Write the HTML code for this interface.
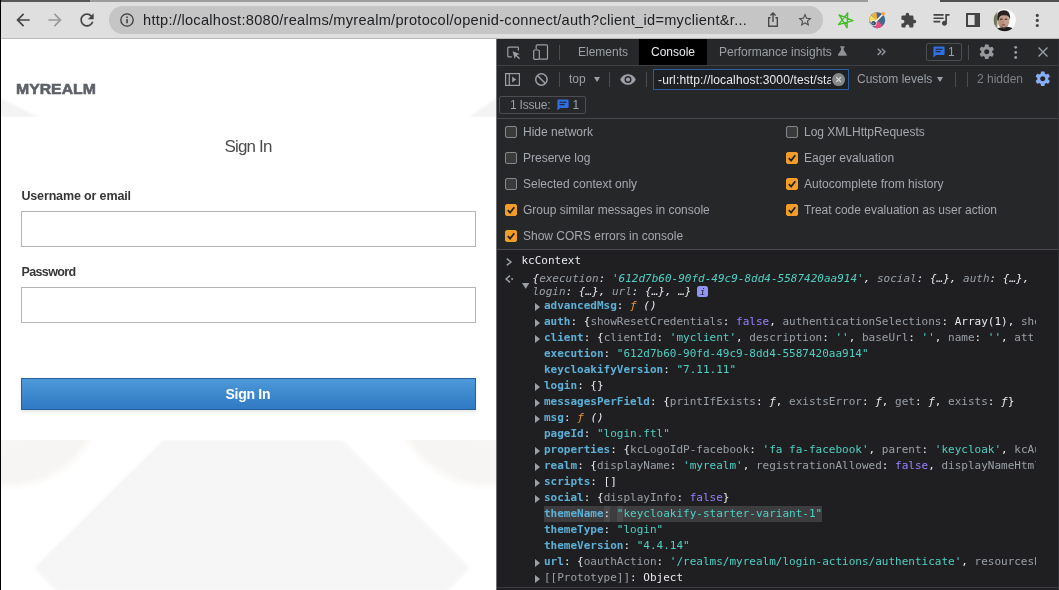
<!DOCTYPE html>
<html lang="en"><head><meta charset="utf-8"><title>Sign in to myrealm</title>
<style>
*{box-sizing:border-box;margin:0;padding:0}
html,body{width:1059px;height:590px;overflow:hidden;background:#fff}
body{position:relative;will-change:transform;font-family:"Liberation Sans",sans-serif}
#chrome>*,#page>*,#dt>*,.cb svg{position:absolute}
#chrome{position:absolute;left:0;top:0;width:1059px;height:39px;background:#dfdfdf}
#strip1{left:0;top:0;width:90px;height:2px;background:#585858}
#strip2{left:90px;top:0;width:778px;height:2px;background:#9c9c9c}
#strip3{left:940px;top:0;width:119px;height:2px;background:#505050}
#tbline{left:0;top:38px;width:1059px;height:1px;background:#b9b9b9}
#pill{left:109px;top:6px;width:714px;height:28px;border-radius:14px;background:#c5c5c5}
#url{left:143.1px;top:12px;font-size:14.6px;line-height:17px;color:#202124;white-space:nowrap;letter-spacing:.265px}
#leftedge{position:absolute;left:0;top:0;width:1px;height:590px;background:#000;z-index:50}
svg{overflow:visible}
/* page */
#page{position:absolute;left:0;top:39px;width:497px;height:551px;background:#fff;overflow:hidden}
#realm{left:15.9px;top:42px;font-weight:bold;font-size:14.4px;line-height:17px;color:#5c6067;white-space:nowrap;-webkit-text-stroke:.55px #5c6067;transform:scaleX(1.098);transform-origin:0 0}
#card{left:0;top:78px;width:497px;height:323px;background:#fff}
#title{left:224.600px;top:97.500px;white-space:nowrap;font-size:17px;line-height:20px;color:#4d4d4d;letter-spacing:-.85px}
.lbl{left:21.4px;font-size:12.5px;line-height:15px;font-weight:bold;color:#363636;white-space:nowrap}
.inp{left:21px;width:455px;height:36px;border:1px solid #b4b4b4;background:#fff}
#btn{left:21px;top:339px;width:455px;height:32px;border:1px solid #265f9c;background:linear-gradient(#4d99d8,#3079c4);box-shadow:0 2px 3px rgba(0,0,0,.1)}
#btnt{left:225.500px;top:346.500px;color:#fff;font-weight:bold;font-size:14px;line-height:17px;letter-spacing:-.28px;white-space:nowrap}
/* devtools */
#dt{position:absolute;left:497px;top:39px;width:562px;height:551px;background:#1f1f22;overflow:hidden;color:#9aa0a6;font-size:12px}
#tabs{left:0;top:0;width:562px;height:27px;background:#262729;border-bottom:1px solid #3f4042}
#row2{left:0;top:27px;width:562px;height:27px;background:#262729}
#row3{left:0;top:53px;width:562px;height:27px;background:#262729;border-bottom:1px solid #46474a}
#sett{left:0;top:80px;width:562px;height:131px;background:#262729;border-bottom:1px solid #4a4b4e}
.t{white-space:nowrap;line-height:14px}
.sep{width:1px;background:#4a4c50}
.cb{width:12px;height:12px;border-radius:2px;border:1px solid #85888c;background:#3b3b3b}
.cb.on{background:#f29d27;border-color:#f29d27}
.cl{font-size:12px;color:#a4a9af;white-space:nowrap;line-height:14px}
.ln{left:0;font-family:"DejaVu Sans Mono","Liberation Mono",monospace;font-size:11px;line-height:16px;height:16px;white-space:pre;color:#e8eaed;letter-spacing:.0px}
.k{color:#5db0d7;font-weight:bold}.s{color:#4fd0c2}.g{color:#9aa0a6}.p{color:#9980ff}.f{color:#e8912d;font-style:italic}.i{font-style:italic}.w{color:#e8eaed}
.tri{width:0;height:0;border-left:5.200px solid #9aa0a6;border-top:4px solid transparent;border-bottom:4px solid transparent;margin-top:-.5px}
</style></head><body>
<div id="chrome">
<div id="strip1"></div><div id="strip2"></div><div id="strip3"></div>
<div id="pill"></div>
<div id="url">http://localhost:8080/realms/myrealm/protocol/openid-connect/auth?client_id=myclient&amp;r...</div>

<svg style="left:13px;top:10px" width="20" height="20" viewBox="0 0 24 24"><path fill="#454545" d="M20 11H7.83l5.59-5.59L12 4l-8 8 8 8 1.41-1.41L7.83 13H20v-2z"/></svg>
<svg style="left:45px;top:10px" width="20" height="20" viewBox="0 0 24 24"><path fill="#9b9b9b" d="M12 4l-1.41 1.41L16.17 11H4v2h12.17l-5.58 5.59L12 20l8-8z"/></svg>
<svg style="left:77px;top:10px" width="20" height="20" viewBox="0 0 24 24"><path fill="#454545" d="M17.65 6.35C16.2 4.9 14.21 4 12 4c-4.42 0-7.99 3.58-7.99 8s3.57 8 7.99 8c3.73 0 6.84-2.55 7.73-6h-2.08c-.82 2.33-3.04 4-5.65 4-3.31 0-6-2.69-6-6s2.69-6 6-6c1.66 0 3.14.69 4.22 1.78L13 11h7V4l-2.35 2.35z"/></svg>
<svg style="left:119px;top:12px" width="16" height="16" viewBox="0 0 16 16"><circle cx="8" cy="8" r="6.2" fill="none" stroke="#3c3c3c" stroke-width="1.3"/><rect x="7.3" y="7" width="1.5" height="4.3" fill="#3c3c3c"/><rect x="7.3" y="4.5" width="1.5" height="1.5" fill="#3c3c3c"/></svg>
<svg style="left:765px;top:11px" width="16" height="18" viewBox="0 0 16 18"><path fill="none" stroke="#4a4a4a" stroke-width="1.4" d="M5.5 6.7H3.7v8.6h8.6V6.7h-1.8M8 11V2.2M5.4 4.6L8 2l2.6 2.6"/></svg>
<svg style="left:797px;top:12px" width="16" height="16" viewBox="0 0 24 24"><path fill="#4a4a4a" d="M22 9.24l-7.19-.62L12 2 9.19 8.63 2 9.24l5.46 4.73L5.82 21 12 17.27 18.18 21l-1.63-7.03L22 9.24zM12 15.4l-3.76 2.27 1-4.28-3.32-2.88 4.38-.38L12 6.1l1.71 4.04 4.38.38-3.32 2.88 1 4.28L12 15.4z"/></svg>
<svg style="left:836px;top:11px" width="19" height="19" viewBox="836 11 19 19"><path fill="none" stroke="#3fbf22" stroke-width="1.300" stroke-linejoin="round" d="M847.7 13L847.1 27.8L839.1 14.8L853 20.7L838.5 24.6Z"/></svg>
<svg style="left:868px;top:11px" width="18" height="18" viewBox="0 0 18 18"><circle cx="9.200" cy="9.200" r="8" fill="#41698a"/><path d="M9.200 9.200L1.300 11A8 8 0 0 1 3 4.200Z" fill="#f7e05a"/><path d="M9.200 9.200L3 4.200A8 8 0 0 1 8.500 1.300Z" fill="#f0b040"/><path d="M9.200 9.200L14.800 14.800A8 8 0 0 1 6.500 16.700Z" fill="#ea4c7f"/><circle cx="5.600" cy="12.200" r="3" fill="#f4ede4"/><circle cx="5.600" cy="12.200" r="2.300" fill="#2b4a68"/><circle cx="5.200" cy="12.400" r="1" fill="#7893ad"/><path d="M7.500 10.800L14.600 3.400" stroke="#fff" stroke-width="1.500"/><circle cx="15.100" cy="2.700" r="1.800" fill="#f3a433"/></svg>
<svg style="left:900.300px;top:12.100px" width="17" height="17" viewBox="0 0 24 24"><path fill="#454545" d="M20.5 11H19V7c0-1.1-.9-2-2-2h-4V3.500a2.500 2.500 0 0 0-5 0V5H4c-1.100 0-1.990.9-1.990 2v3.800H3.500c1.490 0 2.700 1.210 2.700 2.700s-1.210 2.700-2.700 2.700H2V20c0 1.100.9 2 2 2h3.800v-1.500c0-1.490 1.210-2.700 2.700-2.700 1.490 0 2.700 1.210 2.700 2.700V22H17c1.100 0 2-.9 2-2v-4h1.500a2.500 2.500 0 0 0 0-5z"/></svg>
<svg style="left:930.500px;top:8.700px" width="20.200" height="20.200" viewBox="0 0 24 24"><path fill="#454545" d="M15 6H3v2h12V6zm0 4H3v2h12v-2zM3 16h8v-2H3v2zM17 6v8.180c-.310-.110-.650-.180-1-.180-1.660 0-3 1.340-3 3s1.340 3 3 3 3-1.340 3-3V8h3V6h-5z"/></svg>
<svg style="left:966px;top:13px" width="14" height="14" viewBox="0 0 14 14"><rect x="1" y="1" width="12" height="12" fill="none" stroke="#444" stroke-width="2"/><rect x="8.600" y="1" width="4.400" height="12" fill="#444"/></svg>
<svg style="left:993px;top:9px" width="23" height="23" viewBox="0 0 23 23"><defs><clipPath id="av"><circle cx="11.700" cy="11.200" r="11.100"/></clipPath><filter id="avb" x="-10%" y="-10%" width="120%" height="120%"><feGaussianBlur stdDeviation=".55"/></filter></defs><g clip-path="url(#av)"><rect width="23" height="23" fill="#fcfcfc"/><g filter="url(#avb)"><rect x="-1" y="-1" width="5.500" height="25" fill="#8c8f76"/><rect x="1" y="6" width="2.500" height="10" fill="#6f735c"/><path d="M2 24L4 19.500Q11 16.500 19.500 19L21 24Z" fill="#1c1c1c"/><ellipse cx="10.600" cy="12" rx="5.700" ry="7.300" fill="#c59f8d"/><ellipse cx="8.300" cy="13.500" rx="3" ry="5" fill="#b98f7e"/><path d="M4.300 11.500Q3 1.300 10.500 1.200Q18 1 17 11Q16 5.800 11.500 6.200Q6 5.500 5.600 11.500Z" fill="#2b2320"/><ellipse cx="8.300" cy="10.300" rx="1.300" ry=".7" fill="#4a332b"/><ellipse cx="13" cy="10.300" rx="1.300" ry=".7" fill="#4a332b"/><path d="M7 16.200Q10.600 20.500 14.600 16.200Q13 19.300 10.600 19.400Q8.500 19.300 7 16.200Z" fill="#5e4036"/><ellipse cx="10.700" cy="15.900" rx="1.800" ry=".6" fill="#7a4b44"/></g></g></svg>
<svg style="left:1034px;top:13px" width="6" height="15" viewBox="0 0 6 15"><circle cx="3.300" cy="2.400" r="1.550" fill="#454545"/><circle cx="3.300" cy="7.400" r="1.550" fill="#454545"/><circle cx="3.300" cy="12.500" r="1.550" fill="#454545"/></svg>
<div id="tbline"></div>
</div>
<div id="page">
<svg id="kcbg" style="left:0;top:0" width="497" height="551" viewBox="0 39 497 551"><defs><radialGradient id="rg"><stop offset="0" stop-color="#f7f6f5"/><stop offset=".8" stop-color="#f6f5f3"/><stop offset=".9" stop-color="#f5f3f0" stop-opacity=".8"/><stop offset="1" stop-color="#f7f5f2" stop-opacity="0"/></radialGradient><filter id="bl" x="-20%" y="-20%" width="140%" height="140%"><feGaussianBlur stdDeviation="1.500"/></filter><filter id="bl2" x="-30%" y="-30%" width="160%" height="160%"><feGaussianBlur stdDeviation="5"/></filter></defs>
<polygon points="163,440 342,440 470,568 447,591 57,591 34,568" fill="#f6f6f6" filter="url(#bl)"/>
<circle cx="10" cy="395" r="96" fill="url(#rg)"/>
<circle cx="487" cy="395" r="96" fill="url(#rg)"/>
<polygon points="0,98 0,118 40,118" fill="#f3f3f3" filter="url(#bl)"/>
<polygon points="497,98 497,118 468,118" fill="#f3f3f3" filter="url(#bl)"/>
</svg>
<div id="realm">MYREALM</div>
<div id="card"></div>
<div id="title">Sign In</div>
<div class="lbl" style="top:149.500px;letter-spacing:-.14px">Username or email</div>
<div class="inp" style="top:172px"></div>
<div class="lbl" style="top:225.500px;letter-spacing:-.6px">Password</div>
<div class="inp" style="top:248px"></div>
<div id="btn"></div><div id="btnt">Sign In</div>
</div>
<div id="dt">
<div id="tabs"></div><div id="row2"></div><div id="row3"></div><div id="sett"></div>

<!-- tab bar -->
<svg style="left:10px;top:7px" width="14" height="14" viewBox="0 0 14 14"><path fill="none" stroke="#9aa0a6" stroke-width="1.200" d="M11.400 4.500V1.800a.7.700 0 0 0-.7-.7H1.500a.7.700 0 0 0-.7.700v8.400a.7.700 0 0 0 .7.700h3.300"/><path fill="#9aa0a6" d="M5.600 5.300l7.200 2.600-3 1.100 3.200 3.200-1 1-3.200-3.200-1.100 3z"/></svg>
<svg style="left:36px;top:5px" width="16" height="16" viewBox="0 0 16 16"><path fill="none" stroke="#9aa0a6" stroke-width="1.200" d="M3.200 5.500V1.800a1 1 0 0 1 1-1h9.300a1 1 0 0 1 1 1v12.400a1 1 0 0 1-1 1H6.500"/><rect x="0.700" y="6" width="5.600" height="9.300" rx="1" fill="none" stroke="#9aa0a6" stroke-width="1.200"/></svg>
<div class="sep" style="left:62px;top:6px;height:15px"></div>
<div class="t" style="left:81px;top:6px;color:#9aa0a6">Elements</div>
<div style="left:142px;top:0;width:68px;height:26px;background:#000"></div>
<div class="t" style="left:154px;top:6px;color:#e8eaed">Console</div>
<div class="t" style="left:222px;top:6px;color:#9aa0a6">Performance insights</div>
<svg style="left:339.600px;top:7.100px" width="10.800" height="10.400" viewBox="0 0 12 12" preserveAspectRatio="none"><path fill="#909296" d="M3.600 .4h4.800v1.400h-.9v2.700l3.300 5.400a.9.900 0 0 1-.8 1.400H2a.9.900 0 0 1-.8-1.400l3.300-5.400V1.800h-.9z"/></svg>
<svg style="left:380px;top:9.300px" width="9" height="8" viewBox="0 0 9 8"><path fill="none" stroke="#9aa0a6" stroke-width="1.300" d="M.7 .6l3.300 3.200-3.300 3.200M4.700 .6l3.300 3.200-3.300 3.200"/></svg>
<div style="left:429px;top:4px;width:36px;height:18px;border:1px solid #4c4d51;border-radius:2px"></div>
<svg style="left:436px;top:7px" width="12" height="12" viewBox="0 0 12 12"><path fill="#2f6fe3" d="M1.300 0.500h9.400a.9.9 0 0 1 .9.900v6.700a.9.900 0 0 1-.9.900H3.200L.400 11.500V1.400a.9.900 0 0 1 .9-.9z"/><rect x="2.600" y="2.700" width="6.800" height="1.100" fill="#202124"/><rect x="2.600" y="5.100" width="5" height="1.100" fill="#202124"/></svg>
<div class="t" style="left:451px;top:6px;color:#9aa0a6">1</div>
<div class="sep" style="left:471px;top:6px;height:15px"></div>
<svg style="left:481.250px;top:4.450px" width="17.500" height="17.500" viewBox="0 0 24 24"><path fill="#96999e" d="M19.430 12.980c.040-.320.070-.640.070-.980s-.030-.660-.070-.980l2.110-1.650c.190-.150.240-.420.120-.640l-2-3.460c-.120-.220-.390-.300-.610-.220l-2.490 1c-.520-.400-1.080-.730-1.690-.980l-.380-2.650A.488.488 0 0 0 14 2h-4c-.250 0-.460.180-.490.420l-.380 2.650c-.610.250-1.170.590-1.690.980l-2.490-1c-.230-.090-.490 0-.610.220l-2 3.460c-.130.220-.070.490.12.640l2.110 1.650c-.040.320-.070.650-.070.980s.030.660.070.980l-2.110 1.650c-.190.150-.240.420-.120.640l2 3.460c.120.220.390.300.610.220l2.490-1c.520.400 1.080.730 1.690.980l.380 2.650c.030.240.240.420.490.420h4c.250 0 .460-.180.490-.420l.380-2.650c.610-.250 1.170-.590 1.690-.980l2.490 1c.230.090.490 0 .610-.220l2-3.460c.120-.220.070-.490-.12-.640l-2.110-1.650zM12 15.500c-1.930 0-3.500-1.570-3.500-3.500s1.570-3.500 3.500-3.500 3.500 1.570 3.500 3.500-1.570 3.500-3.500 3.500z"/></svg>
<svg style="left:516px;top:6px" width="6" height="15" viewBox="0 0 6 15"><circle cx="2.700" cy="2.300" r="1.400" fill="#9aa0a6"/><circle cx="2.700" cy="7.400" r="1.400" fill="#9aa0a6"/><circle cx="2.700" cy="12.500" r="1.400" fill="#9aa0a6"/></svg>
<svg style="left:541px;top:8px" width="10" height="10" viewBox="0 0 11 11"><path fill="none" stroke="#9aa0a6" stroke-width="1.500" d="M.6 .6l9.800 9.800M10.400 .6L.6 10.400"/></svg>
<!-- row 2 -->
<svg style="left:8px;top:34px" width="15" height="13" viewBox="0 0 15 13"><rect x=".6" y=".6" width="13.800" height="11.800" fill="none" stroke="#9aa0a6" stroke-width="1.200"/><path d="M4.300 .6v11.800" stroke="#9aa0a6" stroke-width="1.200"/><path d="M7.200 3.600l4 2.900-4 2.900z" fill="#9aa0a6"/></svg>
<svg style="left:37px;top:33px" width="15" height="15" viewBox="0 0 15 15"><circle cx="7.400" cy="7.500" r="5.700" fill="none" stroke="#9aa0a6" stroke-width="1.500"/><path d="M3.400 3.500l8 8" stroke="#9aa0a6" stroke-width="1.500"/></svg>
<div class="sep" style="left:62px;top:33px;height:15px"></div>
<div class="t" style="left:72px;top:33px;color:#9aa0a6">top</div>
<div style="left:96.5px;top:37.5px;width:0;height:0;border-top:5px solid #9aa0a6;border-left:3.200px solid transparent;border-right:3.200px solid transparent"></div>
<div class="sep" style="left:112px;top:33px;height:15px"></div>
<svg style="left:123px;top:34.5px" width="16" height="11" viewBox="0 0 16 11"><path fill="#9aa0a6" d="M8 .2C4.500 .2 1.500 2.400 .2 5.500 1.500 8.600 4.500 10.800 8 10.800s6.500-2.200 7.800-5.300C14.500 2.400 11.500 .2 8 .2zm0 8.800a3.500 3.500 0 1 1 0-7 3.500 3.500 0 0 1 0 7zm0-5.600a2.100 2.100 0 1 0 0 4.200 2.100 2.100 0 0 0 0-4.200z"/></svg>
<div class="sep" style="left:149px;top:33px;height:15px"></div>
<div style="left:156px;top:30px;width:196px;height:21px;border:1px solid #2a5c9f;background:#1f2022;overflow:hidden"></div>
<div class="t" style="left:161px;top:34px;color:#e8eaed;width:173px;overflow:hidden;letter-spacing:.15px">-url:http://localhost:3000/test/sta</div>
<svg style="left:335px;top:34px" width="14" height="14" viewBox="0 0 14 14"><circle cx="6.600" cy="6.600" r="6.500" fill="#858688"/><path d="M4.200 4.200l4.800 4.800M9 4.200l-4.800 4.800" stroke="#d4d5d7" stroke-width="1.200"/></svg>
<div class="t" style="left:360px;top:33px;color:#9aa0a6">Custom levels</div>
<div style="left:440px;top:37.5px;width:0;height:0;border-top:5px solid #9aa0a6;border-left:3.200px solid transparent;border-right:3.200px solid transparent"></div>
<div class="sep" style="left:457.5px;top:33px;height:15px"></div>
<div class="sep" style="left:470px;top:33px;height:15px"></div>
<div class="t" style="left:480px;top:33px;color:#7d8186">2 hidden</div>
<svg style="left:537.150px;top:30.950px" width="17.500" height="17.500" viewBox="0 0 24 24"><path fill="#88aef8" d="M19.430 12.980c.040-.320.070-.640.070-.980s-.030-.660-.070-.980l2.110-1.650c.190-.150.240-.420.120-.640l-2-3.460c-.120-.220-.390-.300-.610-.220l-2.490 1c-.520-.400-1.080-.730-1.690-.980l-.380-2.650A.488.488 0 0 0 14 2h-4c-.250 0-.460.180-.490.420l-.380 2.650c-.610.250-1.170.590-1.690.980l-2.490-1c-.230-.090-.490 0-.610.220l-2 3.460c-.130.220-.070.490.12.640l2.110 1.650c-.040.320-.070.650-.070.980s.030.660.070.980l-2.110 1.650c-.190.150-.240.420-.120.640l2 3.460c.120.220.390.300.610.220l2.490-1c.520.400 1.080.730 1.690.980l.380 2.650c.030.240.240.420.490.420h4c.250 0 .460-.180.490-.420l.380-2.650c.610-.250 1.170-.590 1.690-.980l2.490 1c.230.090.490 0 .610-.220l2-3.460c.120-.220.070-.490-.12-.640l-2.110-1.650zM12 15.500c-1.930 0-3.500-1.570-3.500-3.500s1.570-3.500 3.500-3.500 3.500 1.570 3.500 3.500-1.570 3.500-3.500 3.500z"/></svg>
<!-- row 3 -->
<div style="left:2px;top:57px;width:87px;height:18px;border:1px solid #4c4d51;border-radius:2px"></div>
<div class="t" style="left:13px;top:58.500px;color:#9aa0a6;letter-spacing:-.2px">1 Issue:</div>
<svg style="left:60px;top:59.500px" width="12" height="12" viewBox="0 0 12 12"><path fill="#2f6fe3" d="M1.300 0.500h9.400a.9.9 0 0 1 .9.900v6.700a.9.900 0 0 1-.9.900H3.200L.400 11.500V1.400a.9.900 0 0 1 .9-.9z"/><rect x="2.600" y="2.700" width="6.800" height="1.100" fill="#202124"/><rect x="2.600" y="5.100" width="5" height="1.100" fill="#202124"/></svg>
<div class="t" style="left:75.500px;top:58.500px;color:#9aa0a6">1</div>
<div class="cb" style="left:8px;top:87px"></div><div class="cl" style="left:26px;top:86px">Hide network</div>
<div class="cb" style="left:8px;top:113px"></div><div class="cl" style="left:26px;top:112px">Preserve log</div>
<div class="cb" style="left:8px;top:139px"></div><div class="cl" style="left:26px;top:138px">Selected context only</div>
<div class="cb on" style="left:8px;top:165px"><svg style="left:0;top:0" width="10" height="10" viewBox="0 0 10 10"><path d="M1.800 5.200l2.300 2.400 4.200-5.300" fill="none" stroke="#202124" stroke-width="1.700"/></svg></div><div class="cl" style="left:26px;top:164px">Group similar messages in console</div>
<div class="cb on" style="left:8px;top:191px"><svg style="left:0;top:0" width="10" height="10" viewBox="0 0 10 10"><path d="M1.800 5.200l2.300 2.400 4.200-5.300" fill="none" stroke="#202124" stroke-width="1.700"/></svg></div><div class="cl" style="left:26px;top:190px">Show CORS errors in console</div>
<div class="cb" style="left:289px;top:87px"></div><div class="cl" style="left:307px;top:86px">Log XMLHttpRequests</div>
<div class="cb on" style="left:289px;top:113px"><svg style="left:0;top:0" width="10" height="10" viewBox="0 0 10 10"><path d="M1.800 5.200l2.300 2.400 4.200-5.300" fill="none" stroke="#202124" stroke-width="1.700"/></svg></div><div class="cl" style="left:307px;top:112px">Eager evaluation</div>
<div class="cb on" style="left:289px;top:139px"><svg style="left:0;top:0" width="10" height="10" viewBox="0 0 10 10"><path d="M1.800 5.200l2.300 2.400 4.200-5.300" fill="none" stroke="#202124" stroke-width="1.700"/></svg></div><div class="cl" style="left:307px;top:138px">Autocomplete from history</div>
<div class="cb on" style="left:289px;top:165px"><svg style="left:0;top:0" width="10" height="10" viewBox="0 0 10 10"><path d="M1.800 5.200l2.300 2.400 4.200-5.300" fill="none" stroke="#202124" stroke-width="1.700"/></svg></div><div class="cl" style="left:307px;top:164px">Treat code evaluation as user action</div>
<svg style="left:9px;top:218.500px" width="6" height="8" viewBox="0 0 6 8"><path d="M.8 .7l4.200 3.300L.8 7.300" fill="none" stroke="#9aa0a6" stroke-width="1.500"/></svg>
<div class="ln" style="left:24.5px;top:214px;">kcContext</div>
<svg style="left:7.500px;top:235.500px" width="9" height="8" viewBox="0 0 9 8"><path d="M5 .6L1.100 4l3.900 3.400" fill="none" stroke="#9aa0a6" stroke-width="1.500"/><circle cx="7.100" cy="4" r="1" fill="#9aa0a6"/></svg>
<svg style="left:24.900px;top:243.800px" width="8" height="6" viewBox="0 0 8 6"><path d="M0 0h7.400L3.700 5.700z" fill="#9aa0a6"/></svg>
<div class="ln" style="left:35.5px;top:231.5px;"><span class="i">{<span class="g">execution</span>: <span class="s">&#39;612d7b60-90fd-49c9-8dd4-5587420aa914&#39;</span>, <span class="g">social</span>: {…}, <span class="g">auth</span>: {…},</span></div>
<div class="ln" style="left:35.5px;top:244.5px;"><span class="i"><span class="g">login</span>: {…}, <span class="g">url</span>: {…}, …}</span></div>
<div style="left:200px;top:247.400px;width:11px;height:10.500px;border-radius:2.500px;background:#8e97f6"></div><div class="ln" style="left:202.700px;top:245px;color:#202124;font-size:9.500px;font-style:italic">i</div>
<div class="tri" style="left:38px;top:264px"></div>
<div class="ln" style="left:47px;top:259px;width:492px;overflow:hidden"><span class="k">advancedMsg</span>: <span class="f">ƒ</span> <span class="i">()</span></div>
<div class="tri" style="left:38px;top:280px"></div>
<div class="ln" style="left:47px;top:275px;width:492px;overflow:hidden"><span class="k">auth</span>: {<span class="g">showResetCredentials</span>: <span class="p">false</span>, <span class="g">authenticationSelections</span>: Array(1), <span class="g">showTryAnotherWayLink</span></div>
<div class="tri" style="left:38px;top:296px"></div>
<div class="ln" style="left:47px;top:291px;width:492px;overflow:hidden"><span class="k">client</span>: {<span class="g">clientId</span>: <span class="s">&#39;myclient&#39;</span>, <span class="g">description</span>: <span class="s">&#39;&#39;</span>, <span class="g">baseUrl</span>: <span class="s">&#39;&#39;</span>, <span class="g">name</span>: <span class="s">&#39;&#39;</span>, <span class="g">attributes</span></div>
<div class="ln" style="left:47px;top:307px;width:492px;overflow:hidden"><span class="k">execution</span>: <span class="s">"612d7b60-90fd-49c9-8dd4-5587420aa914"</span></div>
<div class="ln" style="left:47px;top:323px;width:492px;overflow:hidden"><span class="k">keycloakifyVersion</span>: <span class="s">"7.11.11"</span></div>
<div class="tri" style="left:38px;top:344px"></div>
<div class="ln" style="left:47px;top:339px;width:492px;overflow:hidden"><span class="k">login</span>: {}</div>
<div class="tri" style="left:38px;top:360px"></div>
<div class="ln" style="left:47px;top:355px;width:492px;overflow:hidden"><span class="k">messagesPerField</span>: {<span class="g">printIfExists</span>: <span class="i">ƒ</span>, <span class="g">existsError</span>: <span class="i">ƒ</span>, <span class="g">get</span>: <span class="i">ƒ</span>, <span class="g">exists</span>: <span class="i">ƒ</span>}</div>
<div class="tri" style="left:38px;top:376px"></div>
<div class="ln" style="left:47px;top:371px;width:492px;overflow:hidden"><span class="k">msg</span>: <span class="f">ƒ</span> <span class="i">()</span></div>
<div class="ln" style="left:47px;top:387px;width:492px;overflow:hidden"><span class="k">pageId</span>: <span class="s">"login.ftl"</span></div>
<div class="tri" style="left:38px;top:408px"></div>
<div class="ln" style="left:47px;top:403px;width:492px;overflow:hidden"><span class="k">properties</span>: {<span class="g">kcLogoIdP-facebook</span>: <span class="s">&#39;fa fa-facebook&#39;</span>, <span class="g">parent</span>: <span class="s">&#39;keycloak&#39;</span>, <span class="g">kcAuthenticatorOTPClass</span></div>
<div class="tri" style="left:38px;top:424px"></div>
<div class="ln" style="left:47px;top:419px;width:492px;overflow:hidden"><span class="k">realm</span>: {<span class="g">displayName</span>: <span class="s">&#39;myrealm&#39;</span>, <span class="g">registrationAllowed</span>: <span class="p">false</span>, <span class="g">displayNameHtml</span></div>
<div class="tri" style="left:38px;top:440px"></div>
<div class="ln" style="left:47px;top:435px;width:492px;overflow:hidden"><span class="k">scripts</span>: []</div>
<div class="tri" style="left:38px;top:456px"></div>
<div class="ln" style="left:47px;top:451px;width:492px;overflow:hidden"><span class="k">social</span>: {<span class="g">displayInfo</span>: <span class="p">false</span>}</div>
<div style="left:47px;top:467px;width:278px;height:16px;background:#3d3d3f"></div><div style="left:107.400px;top:467px;width:5.400px;height:16px;background:#4a4a4c"></div><div style="left:120px;top:467px;width:6px;height:16px;background:#4a4a4c"></div>
<div class="ln" style="left:47px;top:467px;width:492px;overflow:hidden"><span class="k">themeName</span>: <span class="s">"keycloakify-starter-variant-1"</span></div>
<div class="ln" style="left:47px;top:483px;width:492px;overflow:hidden"><span class="k">themeType</span>: <span class="s">"login"</span></div>
<div class="ln" style="left:47px;top:499px;width:492px;overflow:hidden"><span class="k">themeVersion</span>: <span class="s">"4.4.14"</span></div>
<div class="tri" style="left:38px;top:520px"></div>
<div class="ln" style="left:47px;top:515px;width:492px;overflow:hidden"><span class="k">url</span>: {<span class="g">oauthAction</span>: <span class="s">&#39;/realms/myrealm/login-actions/authenticate&#39;</span>, <span class="g">resourcesPath</span></div>
<div class="tri" style="left:38px;top:536px"></div>
<div class="ln" style="left:47px;top:531px;"><span class="g">[[Prototype]]</span>: Object</div>
<div style="left:0;top:548px;width:562px;height:1px;background:#3c3d40"></div>
<div style="left:561px;top:0;width:1px;height:551px;background:#2f3033"></div>
</div>
<div id="leftedge"></div>
<div style="position:absolute;left:496px;top:39px;width:1px;height:551px;background:#6e6f72"></div>
</body></html>
